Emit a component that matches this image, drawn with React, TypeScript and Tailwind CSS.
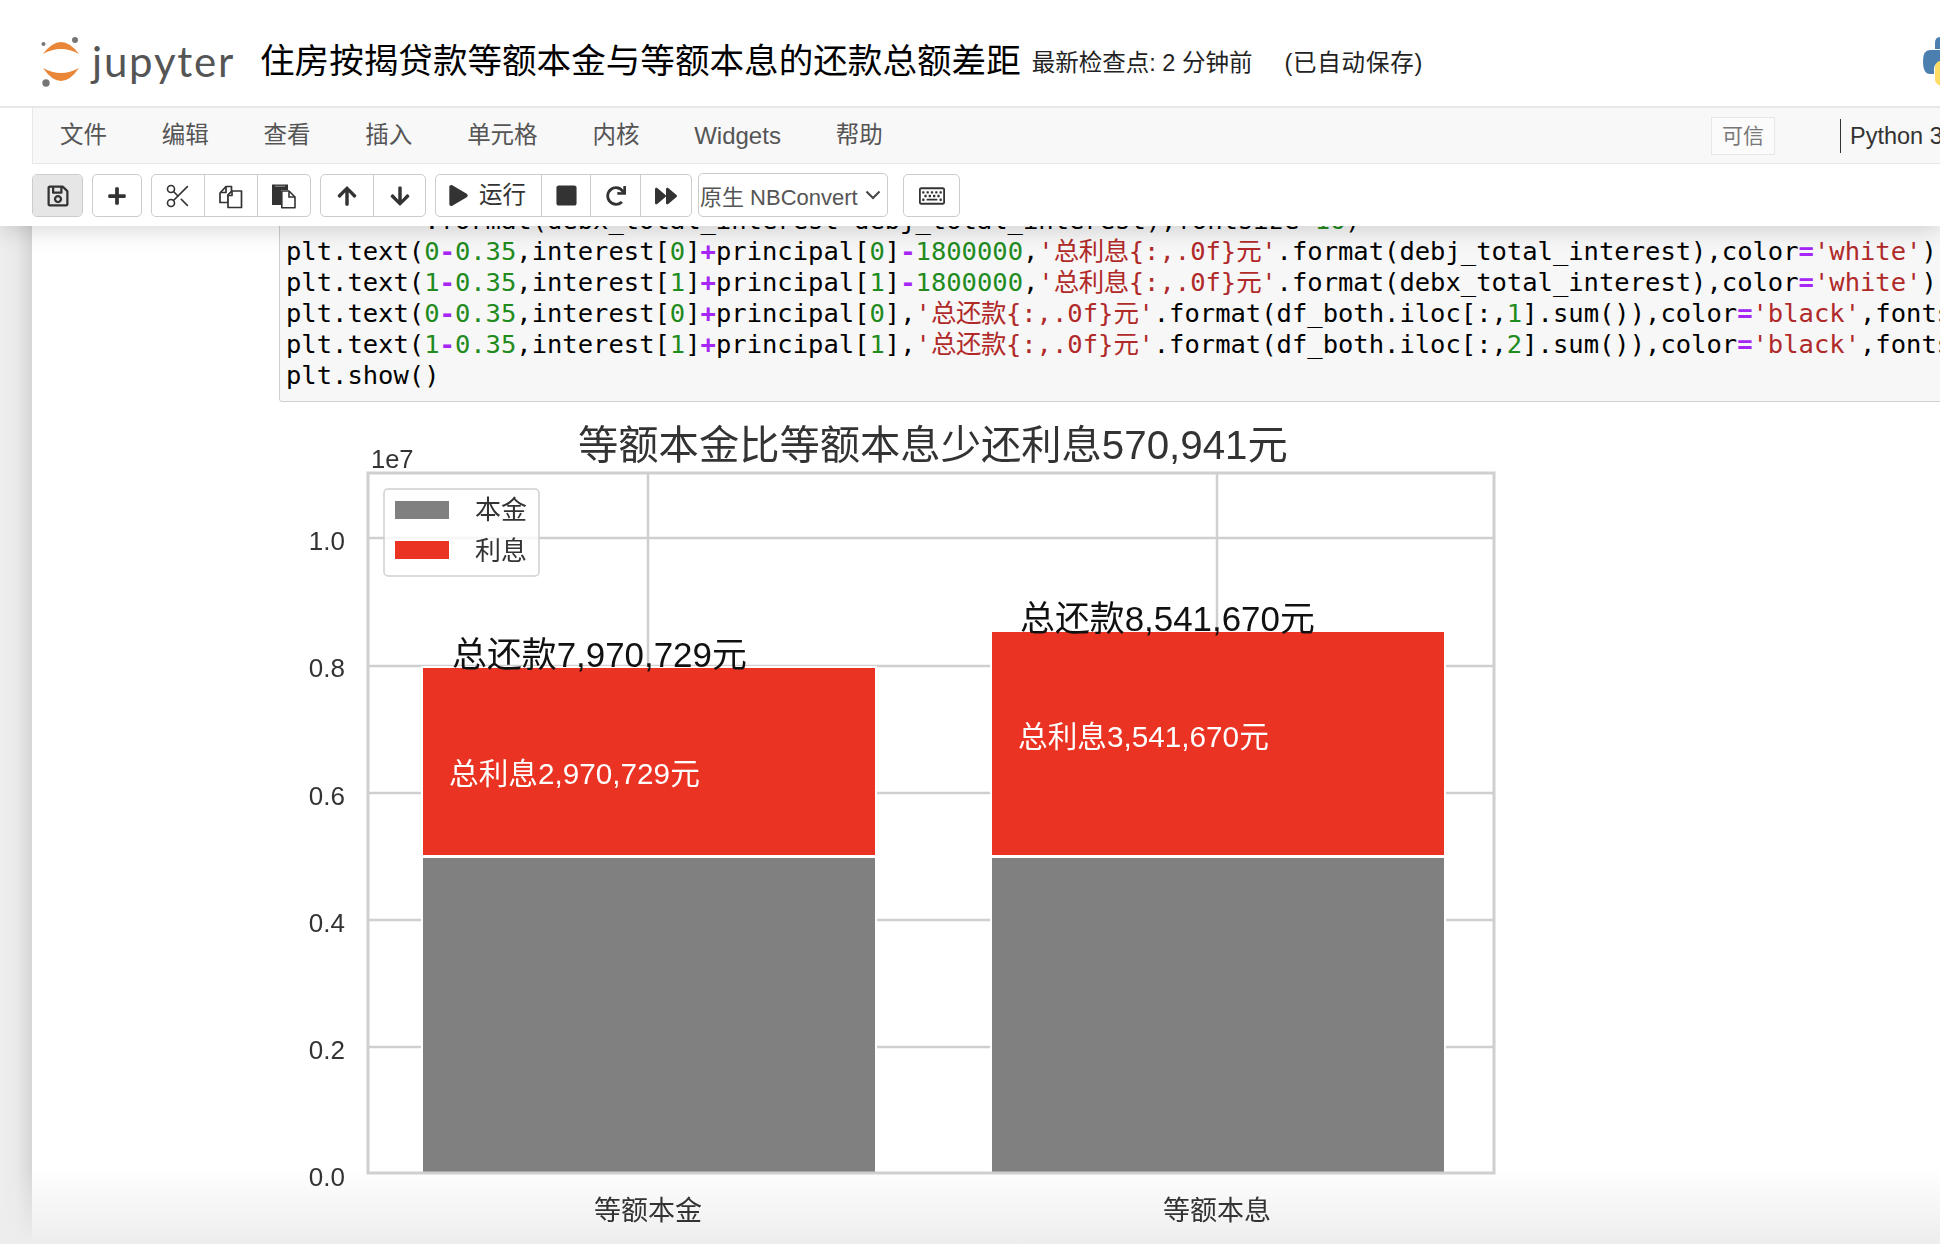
import { Scissors } from "lucide-react";
import { FaArrowDown, FaArrowUp, FaForward, FaPlay, FaPlus, FaRedo, FaRegKeyboard, FaRegSave, FaStop } from "react-icons/fa";
import type { ReactNode } from "react";

const N = ({ children }: { children: ReactNode }) => <span className="text-[#228b1e]">{children}</span>;
const O = ({ children }: { children: ReactNode }) => <span className="font-bold text-[#a526f5]">{children}</span>;
const S = ({ children }: { children: ReactNode }) => <span className="text-[#b02a2a]">{children}</span>;
const C = ({ children }: { children: ReactNode }) => <span className="tracking-[-0.5px]">{children}</span>;

function CopyIcon() {
  return (
    <svg width="24" height="26" viewBox="0 0 24 26" fill="none" stroke="#333" strokeWidth="1.7" strokeLinejoin="round">
      <path d="M1 10 L7 3.5 H12.5 V8.5 L9 12 V19.5 H1 Z" />
      <path d="M9 12 L13 8 H22.5 V24.5 H9 Z" fill="white" />
      <path d="M13 8 V12.5 H9" />
      <path d="M7 3.5 V9.5 H1" />
    </svg>
  );
}

function PasteIcon() {
  return (
    <svg width="24" height="26" viewBox="0 0 24 26">
      <path d="M0 1.5 H16 V7 H9 V22 H0 Z" fill="#333" />
      <path d="M9.8 8 H17 L23 14 V24.8 H9.8 Z" fill="white" stroke="#333" strokeWidth="1.6" strokeLinejoin="round" />
      <path d="M17 8 V14 H23" fill="none" stroke="#333" strokeWidth="1.6" />
      <rect x="3" y="2.6" width="10" height="1.4" fill="#777" />
    </svg>
  );
}

function Btn({ children, w, first, active }: { children: ReactNode; w: number; first?: boolean; active?: boolean }) {
  return (
    <div
      className={`flex h-full items-center justify-center ${first ? "" : "border-l border-[#ccc]"} ${active ? "bg-[#e6e6e6]" : ""}`}
      style={{ width: w }}
    >
      {children}
    </div>
  );
}

function Group({ children, className = "" }: { children: ReactNode; className?: string }) {
  return <div className={`flex h-[43px] overflow-hidden rounded-[5px] border border-[#ccc] bg-white ${className}`}>{children}</div>;
}

function Chart() {
  const grid = [538, 666, 793, 920, 1047];
  const ticks: [string, number][] = [
    ["1.0", 550],
    ["0.8", 677],
    ["0.6", 805],
    ["0.4", 932],
    ["0.2", 1059],
    ["0.0", 1186],
  ];
  return (
    <svg width="1300" height="830" viewBox="279 402 1300 830" className="relative z-[1] block shrink-0 blur-[0.4px]">
      {grid.map((y) => (
        <line key={y} x1="368" x2="1494" y1={y} y2={y} stroke="#cfcfcf" strokeWidth="2.5" />
      ))}
      <line x1="648" x2="648" y1="473" y2="1173" stroke="#cfcfcf" strokeWidth="2.5" />
      <line x1="1217" x2="1217" y1="473" y2="1173" stroke="#cfcfcf" strokeWidth="2.5" />
      <rect x="422" y="667" width="454" height="189" fill="#ea3323" stroke="white" strokeWidth="2" />
      <rect x="422" y="857" width="454" height="316" fill="#808080" stroke="white" strokeWidth="2" />
      <rect x="991" y="631" width="454" height="225" fill="#ea3323" stroke="white" strokeWidth="2" />
      <rect x="991" y="857" width="454" height="316" fill="#808080" stroke="white" strokeWidth="2" />
      <rect x="368" y="473" width="1126" height="700" fill="none" stroke="#cfcfcf" strokeWidth="3" />
      <rect x="384" y="489" width="155" height="87" rx="4" fill="white" fillOpacity="0.8" stroke="#d0d0d0" strokeWidth="1.5" />
      <rect x="395" y="501" width="54" height="18" fill="#808080" />
      <rect x="395" y="541" width="54" height="18" fill="#ea3323" />
      <g fill="#333" fontSize="26">
        <text x="475" y="519">本金</text>
        <text x="475" y="560">利息</text>
        <text x="371" y="468" fontSize="25.5">1e7</text>
        {ticks.map(([t, y]) => (
          <text key={t} x="345" y={y} textAnchor="end">{t}</text>
        ))}
        <text x="648" y="1220" fontSize="27" textAnchor="middle">等额本金</text>
        <text x="1217" y="1220" fontSize="27" textAnchor="middle">等额本息</text>
        <text x="578" y="459" fontSize="40.3">等额本金比等额本息少还利息570,941元</text>
      </g>
      <g fill="#111" fontSize="34.9">
        <text x="452" y="667">总还款7,970,729元</text>
        <text x="1020" y="631">总还款8,541,670元</text>
      </g>
      <g fill="white" fontSize="29.7">
        <text x="449" y="784">总利息2,970,729元</text>
        <text x="1018" y="747">总利息3,541,670元</text>
      </g>
    </svg>
  );
}

export default function App() {
  return (
    <div className="relative flex h-[1244px] w-[1940px] flex-col overflow-hidden bg-white font-['Liberation_Sans','Noto_Sans_CJK_SC',sans-serif]">
      <header className="relative z-10 h-[226px] shrink-0 bg-white shadow-[0_4px_22px_rgba(0,0,0,0.16)]">
        <div className="flex h-[108px] items-center border-b-2 border-[#e7e7e7] pl-[40px] pt-[18px]">
          <svg width="44" height="52" viewBox="40 36 44 52" className="shrink-0">
            <path d="M43 54 Q61 30 79 54 Q61 44 43 54 Z" fill="#e98637" />
            <path d="M43 68 Q61 94 79 68 Q61 78 43 68 Z" fill="#e98637" />
            <circle cx="75" cy="40" r="3" fill="#767677" />
            <circle cx="43.5" cy="44" r="2" fill="#767677" />
            <circle cx="46" cy="83" r="3.7" fill="#767677" />
          </svg>
          <span className="-mt-[3px] ml-[8px] w-[168px] shrink-0 font-['Lato',sans-serif] text-[42px] font-normal leading-none tracking-[1.8px] text-[#555]">jupyter</span>
          <span className="shrink-0 whitespace-nowrap text-[34.6px] text-black">住房按揭贷款等额本金与等额本息的还款总额差距</span>
          <span className="ml-[11px] mt-[4px] whitespace-nowrap text-[23.5px] text-[#222]">最新检查点: 2 分钟前</span>
          <span className="ml-[32px] mt-[4px] whitespace-nowrap text-[23.5px] tracking-[0.8px] text-[#222]">(已自动保存)</span>
          <svg width="17" height="49" viewBox="1923 38 17 49" className="ml-auto mt-[-1px] shrink-0">
            <path d="M1940 38 Q1935 38 1935 44 V50 H1940 V51 H1930 Q1923 51 1923 62 Q1923 75 1930 75 H1934 V70 Q1934 64 1940 64 Z" fill="#4b7fb0" />
            <path d="M1945 62 H1941 Q1935 62 1935 70 V80 Q1935 87 1945 87 Z" fill="#ffdc64" />
          </svg>
        </div>
        <div className="ml-[32px] flex h-[56px] items-center border-b border-l border-[#e7e7e7] bg-[#f8f8f8] text-[23.5px] text-[#555]">
          {["文件", "编辑", "查看", "插入", "单元格", "内核"].map((m) => (
            <span key={m} className="px-[27.4px] first:pl-[27px]">{m}</span>
          ))}
          <span className="px-[27.4px] text-[24px]">Widgets</span>
          <span className="px-[27.4px]">帮助</span>
          <div className="flex-1" />
          <span className="flex h-[38px] w-[64px] items-center justify-center border border-[#e7e7e7] bg-[#fbfbfb] text-[21px] text-[#777]">可信</span>
          <div className="ml-[65px] mt-[1px] flex h-[34px] w-[100px] shrink-0 items-center whitespace-nowrap border-l border-[#333] pl-[9px] text-[23.5px] text-[#333]">
            <span className="mt-[1px]">Python 3</span>
          </div>
        </div>
        <div className="flex h-[62px] items-start gap-[9px] pl-[32px] pt-[10px] text-[#333]">
          <Group className="border-[#999]"><Btn w={49} first active><FaRegSave size={24} /></Btn></Group>
          <Group><Btn w={48} first><FaPlus size={20} /></Btn></Group>
          <Group>
            <Btn w={52} first><Scissors size={28} strokeWidth={1.4} /></Btn>
            <Btn w={53}><CopyIcon /></Btn>
            <Btn w={53}><PasteIcon /></Btn>
          </Group>
          <Group>
            <Btn w={52} first><FaArrowUp size={22} /></Btn>
            <Btn w={52}><FaArrowDown size={22} /></Btn>
          </Group>
          <Group>
            <Btn w={105} first>
              <FaPlay size={21} className="-ml-[3px]" />
              <span className="ml-[10px] text-[23.5px]">运行</span>
            </Btn>
            <Btn w={49}><FaStop size={23} /></Btn>
            <Btn w={50}><FaRedo size={20} /></Btn>
            <Btn w={51}><FaForward size={22} /></Btn>
          </Group>
          <div className="-ml-[3px] -mt-[1px] flex h-[44px] w-[190px] items-center rounded-[5px] border border-[#ccc] bg-white pl-[1px] text-[22px] text-[#555]">
            <span className="mt-[5px] whitespace-nowrap">原生 NBConvert</span>
            <svg width="16" height="10" viewBox="0 0 16 10" className="ml-[7px]" fill="none" stroke="#444" strokeWidth="2"><path d="M1.5 1.5 L8 8 L14.5 1.5" /></svg>
          </div>
          <Group className="ml-[6px]"><Btn w={55} first><FaRegKeyboard size={26} /></Btn></Group>
        </div>
      </header>

      <main className="flex min-h-0 flex-1 bg-[#eee]">
        <div className="w-[32px] shrink-0 bg-gradient-to-r from-[#eeeeee] via-[#eaeaea] to-[#d6d6d6]" />
        <div className="min-w-0 flex-1 overflow-hidden bg-white pl-[247px]">
          <div className="-mt-[22px] w-[1700px] rounded-bl-[3px] border border-[#cfcfcf] bg-[#f7f7f7] pb-[10px] pl-[6px]">
            <pre className="whitespace-pre font-['DejaVu_Sans_Mono','Noto_Sans_CJK_SC',monospace] text-[25.5px] leading-[31px] text-black">
              <div>{"         .format(debx_total_interest"}<O>-</O>{"debj_total_interest),fontsize"}<O>=</O><N>16</N>)</div>
              <div>plt.text(<N>0</N><O>-</O><N>0.35</N>,interest[<N>0</N>]<O>+</O>principal[<N>0</N>]<O>-</O><N>1800000</N>,<S>'<C>总利息</C>{"{:,.0f}"}<C>元</C>'</S>.format(debj_total_interest),color<O>=</O><S>'white'</S>)</div>
              <div>plt.text(<N>1</N><O>-</O><N>0.35</N>,interest[<N>1</N>]<O>+</O>principal[<N>1</N>]<O>-</O><N>1800000</N>,<S>'<C>总利息</C>{"{:,.0f}"}<C>元</C>'</S>.format(debx_total_interest),color<O>=</O><S>'white'</S>)</div>
              <div>plt.text(<N>0</N><O>-</O><N>0.35</N>,interest[<N>0</N>]<O>+</O>principal[<N>0</N>],<S>'<C>总还款</C>{"{:,.0f}"}<C>元</C>'</S>.format(df_both.iloc[:,<N>1</N>].sum()),color<O>=</O><S>'black'</S>,fontsize<O>=</O><N>18</N>)</div>
              <div>plt.text(<N>1</N><O>-</O><N>0.35</N>,interest[<N>1</N>]<O>+</O>principal[<N>1</N>],<S>'<C>总还款</C>{"{:,.0f}"}<C>元</C>'</S>.format(df_both.iloc[:,<N>2</N>].sum()),color<O>=</O><S>'black'</S>,fontsize<O>=</O><N>18</N>)</div>
              <div>plt.show()</div>
            </pre>
          </div>
          <Chart />
        </div>
      </main>

      <div className="pointer-events-none absolute inset-x-0 bottom-0 h-[76px] bg-gradient-to-b from-transparent to-[#ededed]" />
    </div>
  );
}
